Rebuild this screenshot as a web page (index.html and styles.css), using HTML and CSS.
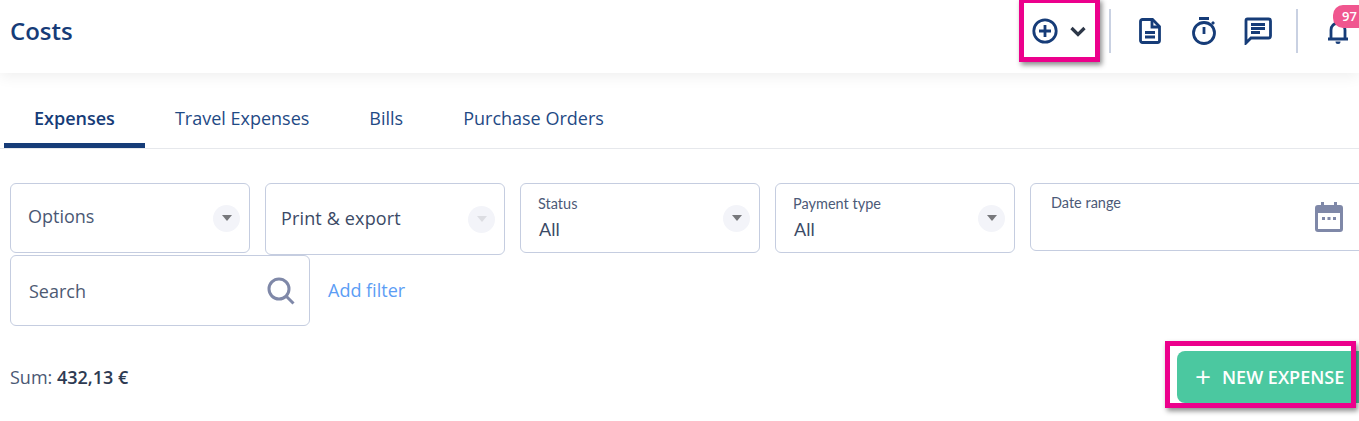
FILE: index.html
```html
<!DOCTYPE html>
<html lang="en">
<head>
  <meta charset="UTF-8">
  <meta name="viewport" content="width=device-width, initial-scale=1.0">
  <title>Costs</title>
  <link rel="stylesheet" href="styles.css">
</head>
<body>
  <header class="topbar">
    <h1 class="page-title">Costs</h1>
    <div class="topbar-actions">
      <svg class="icon icon-add" viewBox="0 0 26 26"><circle cx="13" cy="13" r="11.200"/><path d="M13 7v12M7 13h12"/></svg>
      <svg class="icon icon-chevron" viewBox="0 0 16 16"><path d="M1.500 5l6.500 6.500 6.500-6.500"/></svg>
      <span class="divider divider-first"></span>
      <svg class="icon icon-doc" viewBox="0 0 22 26"><path d="M3.500 1.500h10l7 7v14a2 2 0 0 1-2 2h-15a2 2 0 0 1-2-2v-19a2 2 0 0 1 2-2z"/><path d="M13 2v7h7M6 14.500h10M6 19h10"/></svg>
      <svg class="icon icon-timer" viewBox="0 0 26 28"><circle cx="13" cy="16" r="10.500"/><path d="M8 1.500h10M13 10v7M21 7l2-2"/></svg>
      <svg class="icon icon-chat" viewBox="0 0 28 28"><path d="M3.500 2h21a2 2 0 0 1 2 2v15a2 2 0 0 1-2 2H7l-5 5V3.500a1.500 1.500 0 0 1 1.500-1.500z"/><path d="M7 7.500h14M7 11.500h14M7 15.500h9"/></svg>
      <span class="divider divider-second"></span>
      <div class="bell">
        <svg class="icon icon-bell" viewBox="0 0 24 26"><path d="M2 21h20M5 21V12a7 7 0 0 1 14 0v9"/><path class="bell-clapper" d="M9.500 23.500h5a2.500 2.500 0 0 1-5 0z"/></svg>
        <span class="badge">97</span>
      </div>
    </div>
  </header>

  <nav class="tabs">
    <a class="tab active">Expenses</a>
    <a class="tab">Travel Expenses</a>
    <a class="tab">Bills</a>
    <a class="tab">Purchase Orders</a>
  </nav>

  <section class="filters">
    <div class="filter-row">
      <div class="field field-options">
        <span class="field-plain">Options</span>
        <span class="caret"></span>
      </div>
      <div class="field field-print">
        <span class="field-strong">Print &amp; export</span>
        <span class="caret caret-off"></span>
      </div>
      <div class="field">
        <div class="field-stack">
          <span class="field-label">Status</span>
          <span class="field-value">All</span>
        </div>
        <span class="caret"></span>
      </div>
      <div class="field">
        <div class="field-stack">
          <span class="field-label">Payment type</span>
          <span class="field-value">All</span>
        </div>
        <span class="caret"></span>
      </div>
      <div class="field field-date">
        <span class="field-label date-label">Date range</span>
        <svg class="icon-calendar" viewBox="0 0 28 30">
          <path class="cal-body" fill-rule="evenodd" d="M6 0h3v3h10V0h3v3h3a3 3 0 0 1 3 3v21a3 3 0 0 1-3 3H3a3 3 0 0 1-3-3V6a3 3 0 0 1 3-3h3zM3 11v16h22V11z"/>
          <path class="cal-body" d="M7 15h3v3H7zM12.500 15h3v3h-3zM18 15h3v3h-3z"/>
        </svg>
      </div>
    </div>
    <div class="filter-row filter-row-search">
      <div class="field field-search">
        <span class="search-text">Search</span>
        <svg class="icon-search" viewBox="0 0 28 28"><circle cx="12" cy="12" r="10"/><path d="M19.500 19.500l7 7"/></svg>
      </div>
      <a class="add-filter">Add filter</a>
    </div>
  </section>

  <section class="summary">
    <div class="sum">Sum: <b>432,13 €</b></div>
    <button class="new-expense"><span class="plus">+</span>NEW EXPENSE</button>
  </section>

  <div class="highlight highlight-top"></div>
  <div class="highlight highlight-bottom"></div>
</body>
</html>
```

FILE: styles.css
```css
html, body {
  height: 100%;
}

body {
  margin: 0;
  font-family: "Open Sans", sans-serif;
  background-color: #fff;
  color: #3b4a66;
  position: relative;
  overflow: hidden;
}

.topbar {
  height: 73px;
  display: flex;
  justify-content: space-between;
  align-items: center;
  padding: 0 9px 12px 10px;
  box-sizing: border-box;
  box-shadow: 0 3px 14px rgba(0, 0, 0, 0.07);
  position: relative;
}

.page-title {
  margin: 0;
  font-size: 24px;
  font-weight: 600;
  color: #163c78;
}

.topbar-actions {
  display: flex;
  align-items: center;
}

.icon {
  display: block;
  fill: none;
  stroke: #163c78;
  stroke-width: 2.8;
}

.icon-add {
  width: 26px;
  height: 26px;
}

.icon-chevron {
  width: 16px;
  height: 16px;
  margin-left: 12px;
  stroke: #2d3748;
  stroke-width: 3.2;
}

.divider {
  width: 2px;
  height: 44px;
  background-color: #c9d1e2;
}

.divider-first {
  margin: 0 28px 0 23px;
}

.divider-second {
  margin: 0 28px 0 24px;
}

.icon-doc {
  width: 22px;
  height: 26px;
  margin-right: 30px;
}

.icon-timer {
  width: 26px;
  height: 28px;
  margin-right: 27px;
}

.icon-chat {
  width: 28px;
  height: 28px;
}

.bell {
  position: relative;
  width: 24px;
  height: 26px;
}

.icon-bell {
  width: 24px;
  height: 26px;
}

.bell-clapper {
  fill: #163c78;
  stroke: none;
}

.badge {
  position: absolute;
  top: -13px;
  left: 7px;
  width: 36px;
  height: 23px;
  border-radius: 10px;
  background-color: #f0568f;
  color: #fff;
  font-size: 13px;
  font-weight: 600;
  line-height: 23px;
  padding-left: 9px;
  box-sizing: border-box;
}

.tabs {
  display: flex;
  margin-top: 17px;
  padding-left: 4px;
  height: 58px;
  border-bottom: 1px solid #e6e8ec;
}

.tab {
  padding: 0 30px;
  font-size: 18px;
  line-height: 56px;
  height: 58px;
  box-sizing: border-box;
  color: #1f4a85;
}

.tab.active {
  font-weight: 600;
  color: #163c78;
  border-bottom: 5px solid #163c78;
  border-radius: 4px 4px 0 0;
}

.filters {
  margin-top: 34px;
  padding-left: 10px;
}

.filter-row {
  display: flex;
  gap: 15px;
  height: 72px;
  align-items: flex-start;
}

.filter-row-search {
  gap: 18px;
}

.field {
  flex: none;
  width: 240px;
  height: 70px;
  box-sizing: border-box;
  border: 1px solid #c5cde0;
  border-radius: 6px;
  display: flex;
  justify-content: space-between;
  align-items: center;
  padding: 0 9px 0 17px;
}

.field-options .field-plain {
  margin-bottom: 5px;
}

.field-print {
  height: 72px;
  padding-left: 15px;
}

.field-date {
  width: 340px;
  height: 68px;
  padding: 0;
  position: relative;
}

.field-search {
  width: 300px;
  height: 71px;
  padding: 0 14px 0 18px;
}

.field-plain {
  font-size: 18px;
  color: #4a5874;
}

.field-strong {
  font-size: 18px;
  font-weight: 500;
  letter-spacing: 0.15px;
  color: #3b4a66;
  margin-bottom: 2px;
}

.search-text {
  font-size: 18px;
  color: #4d5a73;
}

.field-stack {
  display: flex;
  flex-direction: column;
  margin-bottom: 2px;
}

.field-label {
  font-family: Lato, sans-serif;
  font-size: 14.500px;
  color: #4c5a78;
  line-height: 18px;
}

.field-value {
  font-family: Lato, sans-serif;
  font-size: 18px;
  color: #3b4a66;
  line-height: 22px;
  margin-top: 5px;
  margin-left: 1px;
}

.date-label {
  position: absolute;
  top: 10px;
  left: 20px;
}

.icon-calendar {
  position: absolute;
  top: 18px;
  left: 284px;
  width: 28px;
  height: 30px;
}

.cal-body {
  fill: #7f88a8;
}

.caret {
  flex: none;
  width: 27px;
  height: 27px;
  border-radius: 50%;
  background-color: #f3f4f9;
  display: flex;
  align-items: center;
  justify-content: center;
}

.caret::after {
  content: "";
  border-left: 5.500px solid transparent;
  border-right: 5.500px solid transparent;
  border-top: 6px solid #77787c;
}

.caret-off::after {
  border-top-color: #dcdde2;
}

.icon-search {
  width: 28px;
  height: 28px;
  fill: none;
  stroke: #7f88a8;
  stroke-width: 3;
}

.add-filter {
  font-size: 18px;
  line-height: 71px;
  color: #5c9df5;
}

.summary {
  display: flex;
  justify-content: space-between;
  align-items: center;
  margin-top: 24px;
  padding-left: 10px;
  height: 52px;
}

.sum {
  font-size: 18px;
  color: #4a5874;
}

.sum b {
  font-weight: 600;
  color: #2d3a52;
}

.new-expense {
  width: 182px;
  height: 52px;
  border: none;
  border-radius: 8px 0 0 8px;
  background-color: #4bc8a0;
  color: #fff;
  font-family: "Open Sans", sans-serif;
  font-size: 18px;
  font-weight: 600;
  text-align: left;
  padding: 0 0 0 18px;
  white-space: nowrap;
}

.plus {
  font-size: 28px;
  font-weight: 400;
  margin-right: 11px;
  line-height: 20px;
  vertical-align: -3px;
}

.highlight {
  position: absolute;
  box-sizing: border-box;
  border: 5px solid #ec008c;
  box-shadow: 2px 3px 5px rgba(0, 0, 0, 0.45);
}

.highlight-top {
  left: 1019px;
  top: -2px;
  width: 81px;
  height: 64px;
}

.highlight-bottom {
  left: 1165px;
  top: 341px;
  width: 191px;
  height: 67px;
}
```
